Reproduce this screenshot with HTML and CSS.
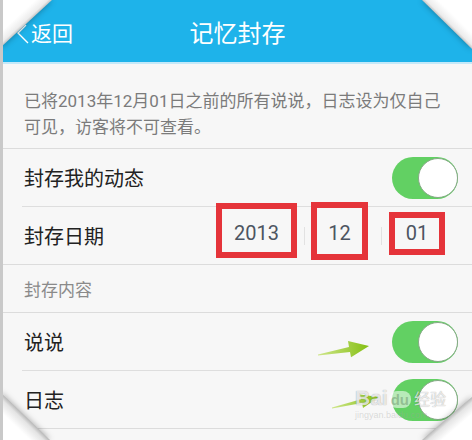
FILE: index.html
```html
<!DOCTYPE html>
<html lang="zh-CN">
<head>
  <meta charset="UTF-8" />
  <title>记忆封存</title>
  <link rel="stylesheet" href="styles.css">
</head>
<body>
  <div class="screen">
    <header class="topbar">
      <div class="back">
        <svg class="chev" width="12" height="22" viewBox="0 0 12 22"><polyline points="9,2 1,10 11,20" fill="none" stroke="#fff" stroke-width="1.4"/></svg>
        <span>返回</span>
      </div>
      <h1 class="title">记忆封存</h1>
      <div></div>
    </header>

    <p class="notice">已将2013年12月01日之前的所有说说，日志设为仅自己<br>可见，访客将不可查看。</p>

    <div class="group">
      <div class="row">
        <span>封存我的动态</span>
        <span class="switch"><i></i></span>
      </div>
      <div class="row">
        <span>封存日期</span>
        <div class="date">
          <span class="field field-year">2013</span>
          <span class="split split-a"></span>
          <span class="field field-month">12</span>
          <span class="split split-b"></span>
          <span class="field field-day">01</span>
        </div>
      </div>
    </div>

    <div class="section">封存内容</div>

    <div class="group">
      <div class="row">
        <span>说说</span>
        <span class="switch"><i></i></span>
      </div>
      <div class="row">
        <span>日志</span>
        <span class="switch"><i></i></span>
      </div>
    </div>

    <!-- annotations drawn over the screenshot -->
    <svg class="arrows" width="472" height="440" viewBox="0 0 472 440">
      <defs>
        <linearGradient id="ag" x1="0" y1="0" x2="1" y2="0">
          <stop offset="0" stop-color="#cfe68a"/>
          <stop offset="1" stop-color="#84bf12"/>
        </linearGradient>
      </defs>
      <polygon fill="url(#ag)" points="318,354.5 349,347 348,341 369,346 351,357.3 350,351.9 318,355.5"/>
      <polygon fill="url(#ag)" points="332,407.5 361,399.3 360,394.4 379,397 363,408 362,403.1 332,408.5"/>
    </svg>

    <div class="mark">
      <span class="mark-bai">Bai</span><span class="mark-paw">du</span><span class="mark-jy">经验</span>
      <div class="mark-url">jingyan.baidu.com</div>
    </div>

    <div class="curl curl-tl"><i></i></div>
    <div class="curl curl-tr"><i></i></div>
    <div class="curl curl-bl"><i></i></div>
    <div class="curl curl-br"><i></i></div>
  </div>
</body>
</html>
```

FILE: styles.css
```css
* {
  box-sizing: border-box;
}
body {
  margin: 0;
  font-family: Roboto, "Noto Sans CJK SC", sans-serif;
  background: #fff;
}
.screen {
  position: relative;
  width: 472px;
  height: 440px;
  overflow: hidden;
  background: #f7f7f7;
  border-left: 3px solid #c9c9c9;
}

/* top bar */
.topbar {
  height: 64px;
  background: #1eb3ea;
  border-bottom: 2px solid #c4e9f9;
  display: grid;
  grid-template-columns: 1fr auto 1fr;
  align-items: center;
  color: #fff;
  padding-top: 1px;
}
.back {
  display: flex;
  align-items: center;
  gap: 2px;
  padding-left: 14px;
  font-size: 21px;
}
.chev {
  margin-top: 4px;
}
.title {
  margin: 0;
  font-size: 24px;
  font-weight: 400;
}

.notice {
  margin: 0;
  padding: 24px 10px 8px 21px;
  font-size: 17px;
  line-height: 26px;
  color: #7b7b7b;
  border-bottom: 1px solid #dcdcdc;
}

/* list rows */
.group {
  border-bottom: 1px solid #dcdcdc;
}
.row {
  display: flex;
  align-items: center;
  justify-content: space-between;
  height: 58px;
  margin-left: 19px;
  padding: 0 14px 0 2px;
  border-bottom: 1px solid #dedede;
  font-size: 20px;
  color: #222;
}
.row:last-child {
  height: 57px;
  border-bottom: none;
}
.section {
  height: 48px;
  display: flex;
  align-items: center;
  padding-left: 21px;
  font-size: 17px;
  color: #8a8a8a;
  border-bottom: 1px solid #dcdcdc;
}

.switch {
  display: flex;
  justify-content: flex-end;
  align-items: center;
  width: 66px;
  height: 42px;
  padding: 1px 0;
  border-radius: 21px;
  background: #62d063;
}
.switch i {
  display: block;
  width: 40px;
  height: 40px;
  border-radius: 50%;
  background: #fff;
  border: 1px solid #86a886;
}

/* date picker, boxed in red */
.date {
  display: flex;
  align-items: center;
  margin-right: 13px;
}
.field {
  display: flex;
  align-items: center;
  justify-content: center;
  border: 6px solid #e5343a;
  font-size: 20px;
  color: #4d5561;
}
.field-year {
  width: 81px;
  height: 55px;
  padding-top: 5px;
  margin-bottom: 11px;
}
.field-month {
  width: 57px;
  height: 58px;
  padding-top: 4px;
  margin-bottom: 10px;
}
.field-day {
  width: 56px;
  height: 43px;
  margin-bottom: 5px;
}
.split {
  width: 1px;
  height: 18px;
  background: #e2e2e2;
}
.split-a {
  margin: 0 6px 0 7px;
}
.split-b {
  margin: 0 7px 0 13px;
}

/* overlays */
.arrows {
  position: absolute;
  left: -3px;
  top: 0;
  pointer-events: none;
}
.mark {
  position: absolute;
  left: 352px;
  top: 386px;
  color: rgba(255, 255, 255, 0.75);
  text-shadow: 0 0 1px rgba(0, 0, 0, 0.4);
  font-family: "Liberation Sans", "Noto Sans CJK SC", sans-serif;
  white-space: nowrap;
}
.mark-bai {
  font-size: 21px;
  font-weight: 700;
}
.mark-paw {
  display: inline-block;
  margin: 0 3px 0 1px;
  padding: 0 2px;
  border-radius: 8px;
  background: rgba(255, 255, 255, 0.55);
  color: rgba(120, 160, 120, 0.6);
  font-size: 15px;
  font-weight: 700;
  text-shadow: none;
}
.mark-jy {
  font-size: 16px;
}
.mark-url {
  font-size: 9px;
  color: rgba(160, 160, 160, 0.35);
  text-shadow: none;
}

.curl {
  position: absolute;
  filter: drop-shadow(0 0 3px rgba(0, 0, 0, 0.35));
}
.curl i {
  display: block;
  width: 100%;
  height: 100%;
}
.curl-tl {
  left: -3px;
  top: 0;
  width: 52px;
  height: 48px;
}
.curl-tl i {
  clip-path: polygon(0 0, 100% 0, 0 100%);
  background: linear-gradient(to bottom right, #fff 34%, #ececec 46%, #c4c4c4 50%);
}
.curl-tr {
  right: 0;
  top: 0;
  width: 50px;
  height: 49px;
}
.curl-tr i {
  clip-path: polygon(0 0, 100% 0, 100% 100%);
  background: linear-gradient(to bottom left, #fff 34%, #ececec 46%, #c4c4c4 50%);
}
.curl-bl {
  left: -3px;
  bottom: 0;
  width: 50px;
  height: 48px;
}
.curl-bl i {
  clip-path: polygon(0 0, 100% 100%, 0 100%);
  background: linear-gradient(to top right, #fff 30%, #e4e4e4 44%, #b8b8b8 50%);
}
.curl-br {
  right: 0;
  bottom: 0;
  width: 50px;
  height: 43px;
}
.curl-br i {
  clip-path: polygon(100% 0, 100% 100%, 0 100%);
  background: linear-gradient(to top left, #fff 30%, #e4e4e4 44%, #b8b8b8 50%);
}
```
